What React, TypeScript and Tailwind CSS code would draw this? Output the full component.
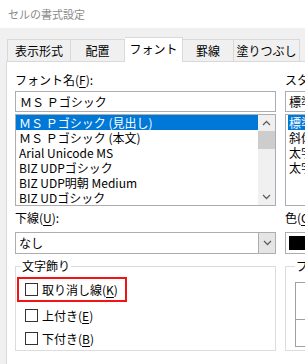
import React from 'react';

const tabs = [
  { label: '表示形式', w: 'w-[64px]' },
  { label: '配置', w: 'w-[54px]' },
  { label: 'フォント', w: 'w-[58px]', active: true },
  { label: '罫線', w: 'w-[51px]' },
  { label: '塗りつぶし', w: 'w-[66px]' },
];

const fonts = [
  'ＭＳ Ｐゴシック (見出し)',
  'ＭＳ Ｐゴシック (本文)',
  'Arial Unicode MS',
  'BIZ UDPゴシック',
  'BIZ UDP明朝 Medium',
  'BIZ UDゴシック',
];

const styles = ['標準', '斜体', '太字', '太字 斜体'];

const Chevron = ({ up }: { up?: boolean }) => (
  <svg width="9" height="6" viewBox="0 0 9 6" className="block">
    <path
      d={up ? 'M1 5 L4.5 1.5 L8 5' : 'M1 1 L4.5 4.5 L8 1'}
      fill="none"
      stroke="#606060"
      strokeWidth="1.3"
    />
  </svg>
);

const Label = ({ text, acc, tail = '):' }: { text: string; acc: string; tail?: string }) => (
  <div className="h-[16px] leading-[16px] whitespace-nowrap">
    {text}(<span className="underline underline-offset-2">{acc}</span>{tail}
  </div>
);

const Check = ({ text, acc }: { text: string; acc: string }) => (
  <div className="flex items-center gap-[4px] whitespace-nowrap">
    <span className="w-[13px] h-[13px] border border-[#333333] bg-white shrink-0" />
    <span className="leading-[16px]">
      {text}(<span className="underline underline-offset-2">{acc}</span>)
    </span>
  </div>
);

export default function App() {
  return (
    <div className="w-[305px] h-[364px] overflow-hidden flex flex-col bg-white text-[12px] text-black font-['Noto_Sans_CJK_JP',sans-serif]">
      {/* title bar */}
      <div className="h-[28px] shrink-0 pl-[8px] leading-[28px] text-[11px] text-[#8a8a8a]">セルの書式設定</div>

      <div className="flex-1 flex flex-col bg-[#f0f0f0] pl-[6px]">
        {/* tabs */}
        <div className="h-[33px] shrink-0 flex items-end pl-[1px]">
          {tabs.map((t, i) => (
            <div
              key={t.label}
              className={
                t.active
                  ? `${t.w} h-[25px] -mb-[1px] relative z-10 bg-white border-t border-r border-[#d9d9d9] flex items-center justify-center pb-[2px]`
                  : `${t.w} h-[22px] border-t border-r border-[#d9d9d9] flex items-center justify-center ${i === 0 ? 'border-l' : ''}`
              }
            >
              {t.label}
            </div>
          ))}
        </div>

        {/* panel */}
        <div className="flex-1 bg-white border-t border-l border-[#d9d9d9] pl-[8px] pt-[10px] flex gap-[9px]">
          {/* left column */}
          <div className="w-[261px] shrink-0 flex flex-col">
            <Label text="フォント名" acc="F" />
            <div className="mt-[3px] h-[21px] border border-[#abadb3] pl-[4px] leading-[19px]">ＭＳ Ｐゴシック</div>
            <div className="mt-[2px] h-[92px] border border-[#abadb3] flex">
              <div className="flex-1 flex flex-col">
                {fonts.map((f, i) => (
                  <div
                    key={f}
                    className={`h-[15px] leading-[15px] pl-[3px] whitespace-nowrap ${i === 0 ? 'bg-[#0078d7] text-white' : ''}`}
                  >
                    {f}
                  </div>
                ))}
              </div>
              <div className="w-[17px] bg-[#f0f0f0] flex flex-col">
                <div className="h-[16px] flex items-center justify-center">
                  <Chevron up />
                </div>
                <div className="h-[18px] bg-[#cdcdcd]" />
                <div className="flex-1" />
                <div className="h-[16px] flex items-center justify-center">
                  <Chevron />
                </div>
              </div>
            </div>

            <div className="mt-[4px]">
              <Label text="下線" acc="U" />
            </div>
            <div className="mt-[6px] h-[22px] border border-[#adadad] flex">
              <div className="flex-1 pl-[3px] leading-[20px]">なし</div>
              <div className="w-[17px] bg-[#e5e5e5] border-l border-[#adadad] flex items-center justify-center">
                <Chevron />
              </div>
            </div>

            <fieldset className="mt-[4px] h-[93px] border border-[#dcdcdc] pl-[1px] flex flex-col">
              <legend className="ml-[4px] px-[1px] leading-[16px]">文字飾り</legend>
              <div className="mt-[3px] w-[110px] h-[25px] border-2 border-[#f01414] pl-[6px] flex items-center">
                <Check text="取り消し線" acc="K" />
              </div>
              <div className="mt-[2px] h-[23px] pl-[8px] flex items-center">
                <Check text="上付き" acc="E" />
              </div>
              <div className="h-[23px] pl-[8px] flex items-center">
                <Check text="下付き" acc="B" />
              </div>
            </fieldset>
          </div>

          {/* right column */}
          <div className="w-[140px] shrink-0 flex flex-col">
            <Label text="スタイル" acc="Y" />
            <div className="mt-[3px] h-[21px] border border-[#abadb3] pl-[3px] leading-[19px]">標準</div>
            <div className="mt-[2px] h-[92px] border border-[#abadb3] pl-[2px] flex flex-col">
              {styles.map((s, i) => (
                <div
                  key={s}
                  className={`h-[15px] leading-[15px] pl-[1px] whitespace-nowrap ${i === 0 ? 'bg-[#0078d7] text-white' : ''}`}
                >
                  {s}
                </div>
              ))}
            </div>

            <div className="mt-[4px]">
              <Label text="色" acc="C" />
            </div>
            <div className="mt-[6px] h-[22px] border border-[#adadad] p-[3px]">
              <div className="h-full bg-black" />
            </div>

            <fieldset className="mt-[4px] h-[93px] border border-[#dcdcdc] pl-[9px] flex flex-col">
              <legend className="ml-[0px] px-[1px] leading-[16px]">プレビュー</legend>
              <div className="mt-[8px] h-[65px] border border-[#a0a0a0] flex flex-col">
                <div className="h-[37px] border-b border-[#a0a0a0]" />
              </div>
            </fieldset>
          </div>
        </div>
      </div>
    </div>
  );
}
